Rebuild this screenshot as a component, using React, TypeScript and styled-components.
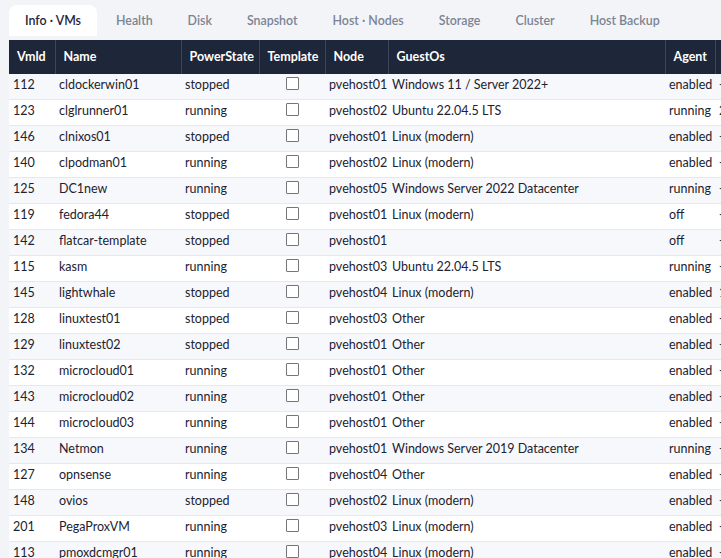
import React from "react";
import styled, { createGlobalStyle } from "styled-components";

type Vm = {
  id: number;
  name: string;
  state: string;
  node: string;
  os: string;
  agent: string;
  mem: string;
};

const VMS: Vm[] = [
  { id: 112, name: "cldockerwin01", state: "stopped", node: "pvehost01", os: "Windows 11 / Server 2022+", agent: "enabled", mem: "-" },
  { id: 123, name: "clglrunner01", state: "running", node: "pvehost02", os: "Ubuntu 22.04.5 LTS", agent: "running", mem: "2" },
  { id: 146, name: "clnixos01", state: "stopped", node: "pvehost01", os: "Linux (modern)", agent: "enabled", mem: "-" },
  { id: 140, name: "clpodman01", state: "running", node: "pvehost02", os: "Linux (modern)", agent: "enabled", mem: "-" },
  { id: 125, name: "DC1new", state: "running", node: "pvehost05", os: "Windows Server 2022 Datacenter", agent: "running", mem: "-" },
  { id: 119, name: "fedora44", state: "stopped", node: "pvehost01", os: "Linux (modern)", agent: "off", mem: "-" },
  { id: 142, name: "flatcar-template", state: "stopped", node: "pvehost01", os: "", agent: "off", mem: "-" },
  { id: 115, name: "kasm", state: "running", node: "pvehost03", os: "Ubuntu 22.04.5 LTS", agent: "running", mem: "-" },
  { id: 145, name: "lightwhale", state: "stopped", node: "pvehost04", os: "Linux (modern)", agent: "enabled", mem: "1" },
  { id: 128, name: "linuxtest01", state: "stopped", node: "pvehost03", os: "Other", agent: "enabled", mem: "-" },
  { id: 129, name: "linuxtest02", state: "stopped", node: "pvehost01", os: "Other", agent: "enabled", mem: "-" },
  { id: 132, name: "microcloud01", state: "running", node: "pvehost01", os: "Other", agent: "enabled", mem: "-" },
  { id: 143, name: "microcloud02", state: "running", node: "pvehost01", os: "Other", agent: "enabled", mem: "-" },
  { id: 144, name: "microcloud03", state: "running", node: "pvehost01", os: "Other", agent: "enabled", mem: "-" },
  { id: 134, name: "Netmon", state: "running", node: "pvehost01", os: "Windows Server 2019 Datacenter", agent: "running", mem: "-" },
  { id: 127, name: "opnsense", state: "running", node: "pvehost04", os: "Other", agent: "enabled", mem: "-" },
  { id: 148, name: "ovios", state: "stopped", node: "pvehost02", os: "Linux (modern)", agent: "enabled", mem: "-" },
  { id: 201, name: "PegaProxVM", state: "running", node: "pvehost03", os: "Linux (modern)", agent: "enabled", mem: "-" },
  { id: 113, name: "pmoxdcmgr01", state: "running", node: "pvehost04", os: "Linux (modern)", agent: "enabled", mem: "-" },
];

const TABS = ["Info · VMs", "Health", "Disk", "Snapshot", "Host · Nodes", "Storage", "Cluster", "Host Backup"];

const COLUMNS = [
  { label: "Vmld", width: 46 },
  { label: "Name", width: 126 },
  { label: "PowerState", width: 78 },
  { label: "Template", width: 66 },
  { label: "Node", width: 63 },
  { label: "GuestOs", width: 277 },
  { label: "Agent", width: 50 },
  { label: "", width: 70 },
];

const App = () => {
  return (
    <Page>
      <GlobalStyle />
      <TabBar>
        {TABS.map((tab, i) => (
          <Tab key={tab} $active={i === 0}>
            {tab}
          </Tab>
        ))}
      </TabBar>
      <TableWrapper>
        <Table>
          <colgroup>
            {COLUMNS.map((c, i) => (
              <col key={i} style={{ width: c.width }} />
            ))}
          </colgroup>
          <thead>
            <tr>
              {COLUMNS.map((c, i) => (
                <HeadCell key={i}>{c.label}</HeadCell>
              ))}
            </tr>
          </thead>
          <tbody>
            {VMS.map((vm) => (
              <Row key={vm.id}>
                <Cell>{vm.id}</Cell>
                <Cell>{vm.name}</Cell>
                <Cell>{vm.state}</Cell>
                <CheckCell>
                  <Checkbox />
                </CheckCell>
                <Cell>{vm.node}</Cell>
                <Cell>{vm.os}</Cell>
                <Cell>{vm.agent}</Cell>
                <Cell>{vm.mem}</Cell>
              </Row>
            ))}
          </tbody>
        </Table>
      </TableWrapper>
    </Page>
  );
};

const GlobalStyle = createGlobalStyle`
  html, body {
    margin: 0;
    padding: 0;
    background: #f3f4f7;
    overflow: hidden;
  }
  body {
    font-family: "Segoe UI", Lato, "Noto Sans", sans-serif;
    color: #1c2230;
  }
`;

const Page = styled.div`
  padding: 5px 0 0 9px;
  width: 712px;
  height: 553px;
  overflow: hidden;
`;

const TabBar = styled.div`
  display: flex;
  gap: 3px;
  padding-bottom: 4px;
`;

const Tab = styled.div<{ $active?: boolean }>`
  height: 31px;
  display: flex;
  align-items: center;
  padding: 0 16px 0 16px;
  border-radius: 8px 8px 0 0;
  font-size: 12.4px;
  font-weight: 600;
  white-space: nowrap;
  background: ${({ $active }) => ($active ? "#ffffff" : "transparent")};
  color: ${({ $active }) => ($active ? "#1e2639" : "#7b8494")};
`;

const TableWrapper = styled.div`
  overflow: hidden;
  width: 712px;
`;

const Table = styled.table`
  table-layout: fixed;
  border-collapse: collapse;
  width: 776px;
  font-size: 12.5px;
`;

const HeadCell = styled.th`
  height: 33px;
  padding: 0 8px 1px;
  background: #1e2639;
  color: #ffffff;
  font-weight: 700;
  font-size: 12.5px;
  text-align: left;
  white-space: nowrap;
  border-left: 1px solid #3c475c;

  &:first-child {
    border-left: none;
  }
`;

const Row = styled.tr`
  background: #ffffff;
  border-bottom: 1px solid #e6e8ed;

  &:nth-child(odd) {
    background: #f7f8fb;
  }
`;

const Cell = styled.td`
  height: 21px;
  padding: 0 1px 4px 4px;
  white-space: nowrap;
  overflow: visible;
  color: #1c2230;
`;

const CheckCell = styled(Cell)`
  text-align: center;
  vertical-align: top;
  padding: 3px 0 0;
  height: 22px;
`;

const Checkbox = styled.span`
  display: inline-block;
  width: 11px;
  height: 11px;
  border: 1px solid #767676;
  border-radius: 1px;
  background: #ffffff;
`;

export default App;
